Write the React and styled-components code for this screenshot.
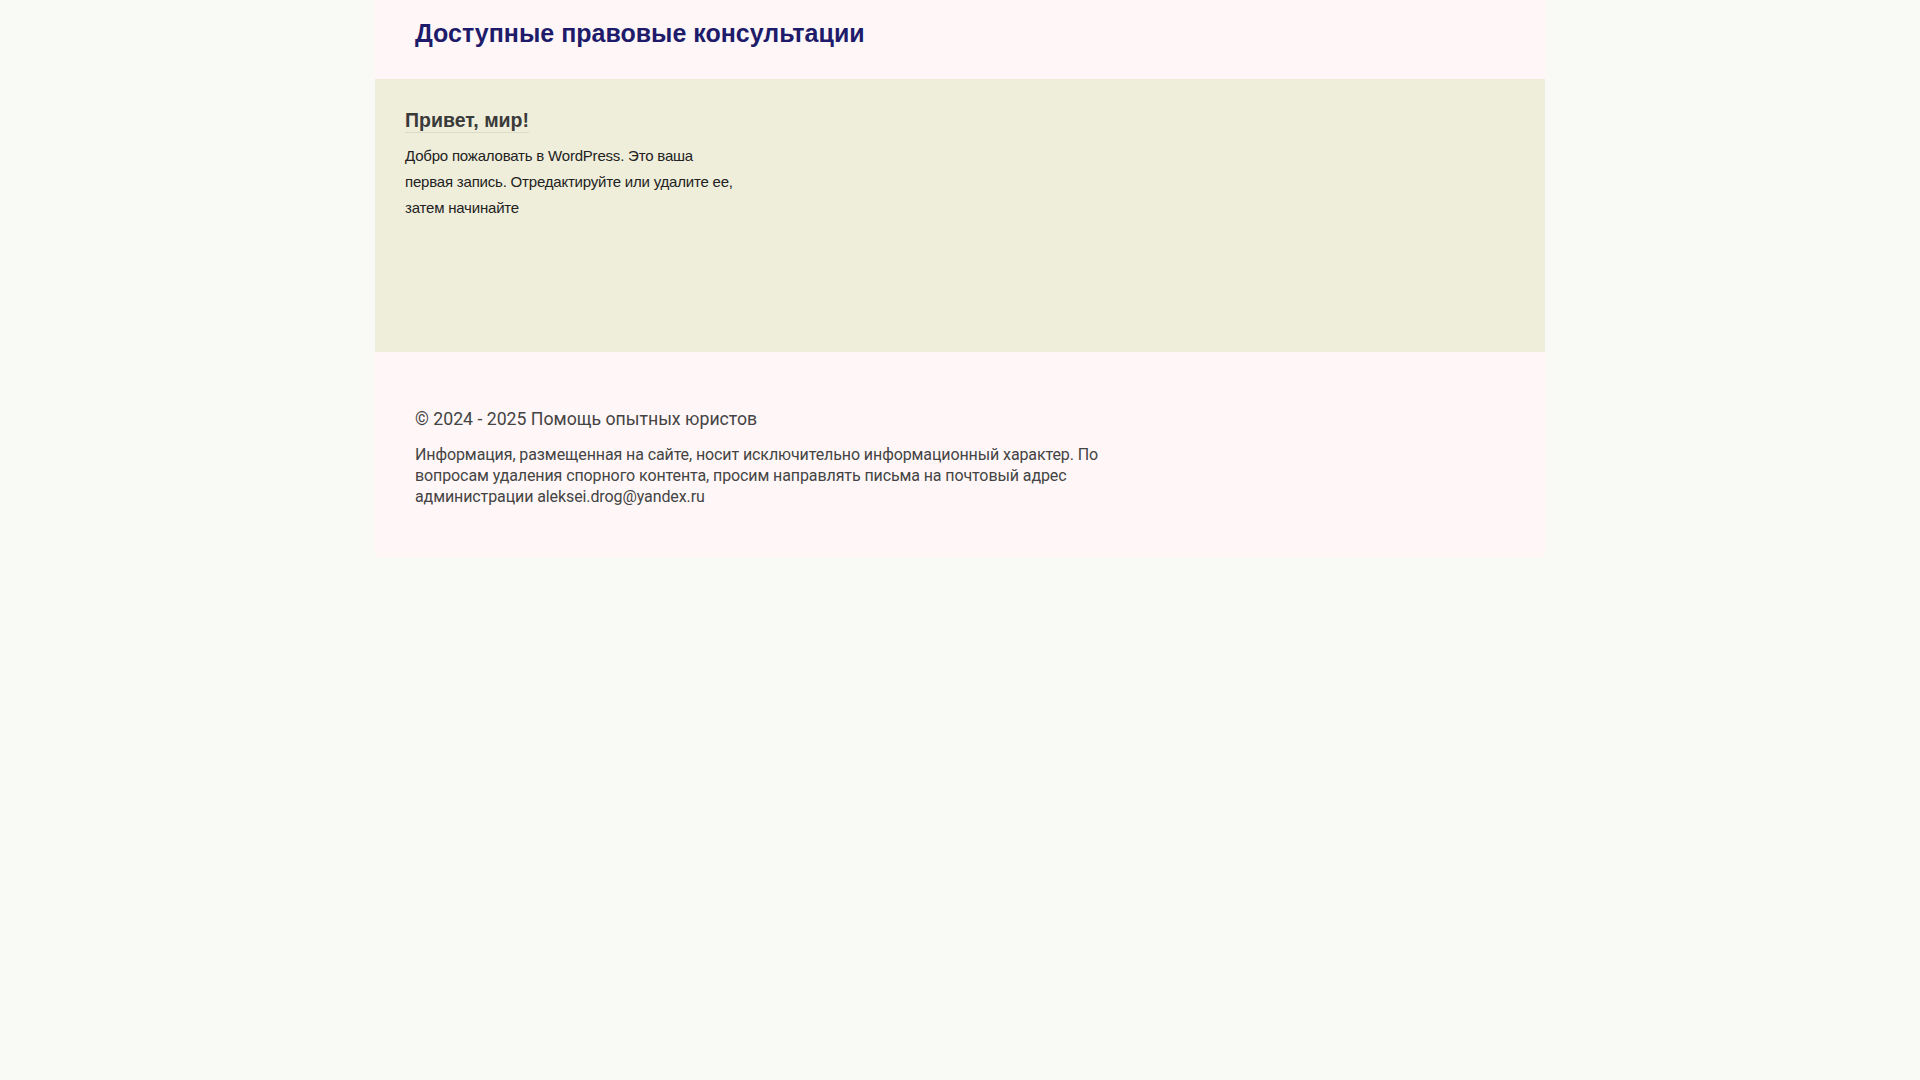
import styled, { createGlobalStyle } from 'styled-components'

const GlobalStyle = createGlobalStyle`
  html, body {
    margin: 0;
    padding: 0;
    background: #f9f9f5;
  }
`

export default function App() {
  return (
    <>
      <GlobalStyle />
      <Page>
        <Header>
          <SiteTitle href='#'>Доступные правовые консультации</SiteTitle>
        </Header>

        <Main>
          <Post>
            <PostTitle>Привет, мир!</PostTitle>
            <PostText>
              Добро пожаловать в WordPress. Это ваша первая запись.
              Отредактируйте или удалите ее, затем начинайте
            </PostText>
          </Post>
        </Main>

        <Footer>
          <Copyright>© 2024 - 2025 Помощь опытных юристов</Copyright>
          <Notice>
            Информация, размещенная на сайте, носит исключительно
            информационный характер. По вопросам удаления спорного контента,
            просим направлять письма на почтовый адрес администрации
            aleksei.drog@yandex.ru
          </Notice>
        </Footer>
      </Page>
    </>
  )
}

const Page = styled.div`
  width: 1170px;
  margin: 0 auto;
`

const Header = styled.header`
  height: 79px;
  box-sizing: border-box;
  padding: 18px 40px 0;
  background: #fff7f7;
`

const SiteTitle = styled.a`
  font-family: 'Liberation Sans', Arial, sans-serif;
  font-size: 25px;
  font-weight: 700;
  line-height: 30px;
  color: #1e1b6b;
  text-decoration: none;
`

const Main = styled.main`
  height: 273px;
  box-sizing: border-box;
  padding: 30px 30px 0;
  background: #efeedb;
`

const Post = styled.article`
  width: 332px;
`

const PostTitle = styled.h2`
  display: inline-block;
  margin: 0 0 10px;
  padding-bottom: 1px;
  border-bottom: 1px solid #dcdbc8;
  font-family: 'Liberation Sans', Arial, sans-serif;
  font-size: 19.5px;
  font-weight: 700;
  line-height: 22px;
  color: #3a3a3a;
`

const PostText = styled.p`
  margin: 0;
  font-family: 'Liberation Sans', Arial, sans-serif;
  font-size: 15px;
  letter-spacing: -0.2px;
  line-height: 26px;
  color: #222;
`

const Footer = styled.footer`
  height: 205px;
  box-sizing: border-box;
  padding: 56px 40px 0;
  background: #fff7f7;
  font-family: Roboto, 'Liberation Sans', sans-serif;
  color: #444;
`

const Copyright = styled.p`
  margin: 0 0 14px;
  font-size: 17.7px;
  line-height: 22px;
`

const Notice = styled.p`
  margin: 0;
  width: 720px;
  font-size: 16px;
  letter-spacing: -0.1px;
  line-height: 21px;
`
